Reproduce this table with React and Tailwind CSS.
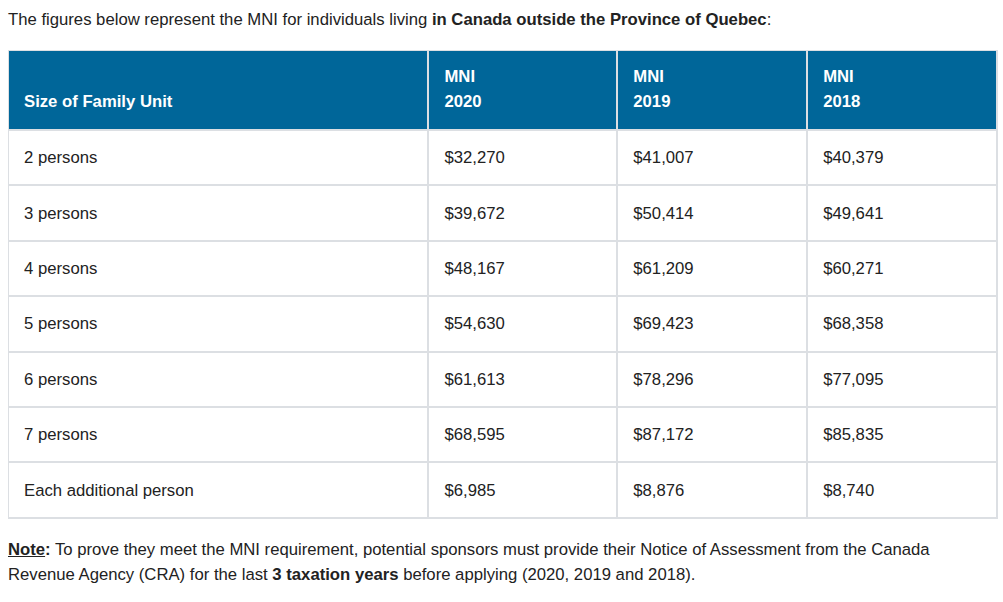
const rows = [
  ["2 persons", "$32,270", "$41,007", "$40,379"],
  ["3 persons", "$39,672", "$50,414", "$49,641"],
  ["4 persons", "$48,167", "$61,209", "$60,271"],
  ["5 persons", "$54,630", "$69,423", "$68,358"],
  ["6 persons", "$61,613", "$78,296", "$77,095"],
  ["7 persons", "$68,595", "$87,172", "$85,835"],
  ["Each additional person", "$6,985", "$8,876", "$8,740"],
];

const years = ["2020", "2019", "2018"];

export default function App() {
  return (
    <div className="bg-white px-2 pt-[7px] text-[16.7px] leading-[25px] text-[#222]" style={{ fontFamily: '"Liberation Sans", Arial, sans-serif' }}>
      <p>
        The figures below represent the MNI for individuals living{" "}
        <strong className="font-bold">in Canada outside the Province of Quebec</strong>:
      </p>

      <table className="mt-[18px] w-[990px] border-separate border-spacing-0 border-l border-t border-[#dcdfe3]">
        <colgroup>
          <col className="w-[421px]" />
          <col className="w-[189px]" />
          <col className="w-[190px]" />
          <col className="w-[190px]" />
        </colgroup>
        <thead>
          <tr className="h-[80px] bg-[#006699] text-white">
            <th className="border-b-2 border-r-2 border-[#dcdfe3] px-[15px] pb-[15px] text-left align-bottom font-bold">
              Size of Family Unit
            </th>
            {years.map((y) => (
              <th key={y} className="border-b-2 border-r-2 border-[#dcdfe3] px-[15px] pb-[15px] text-left align-bottom font-bold">
                MNI
                <br />
                {y}
              </th>
            ))}
          </tr>
        </thead>
        <tbody>
          {rows.map((r) => (
            <tr key={r[0]} className="h-[55.4px]">
              {r.map((c, i) => (
                <td key={i} className="border-b-2 border-r-2 border-[#dcdfe3] px-[15px] align-middle">
                  {c}
                </td>
              ))}
            </tr>
          ))}
        </tbody>
      </table>

      <p className="mt-[18px]">
        <strong className="font-bold underline">Note</strong>
        <strong className="font-bold">:</strong> To prove they meet the MNI requirement, potential sponsors must provide their Notice of Assessment from the Canada Revenue Agency (CRA) for the last{" "}
        <strong className="font-bold">3 taxation years</strong> before applying (2020, 2019 and 2018).
      </p>
    </div>
  );
}
